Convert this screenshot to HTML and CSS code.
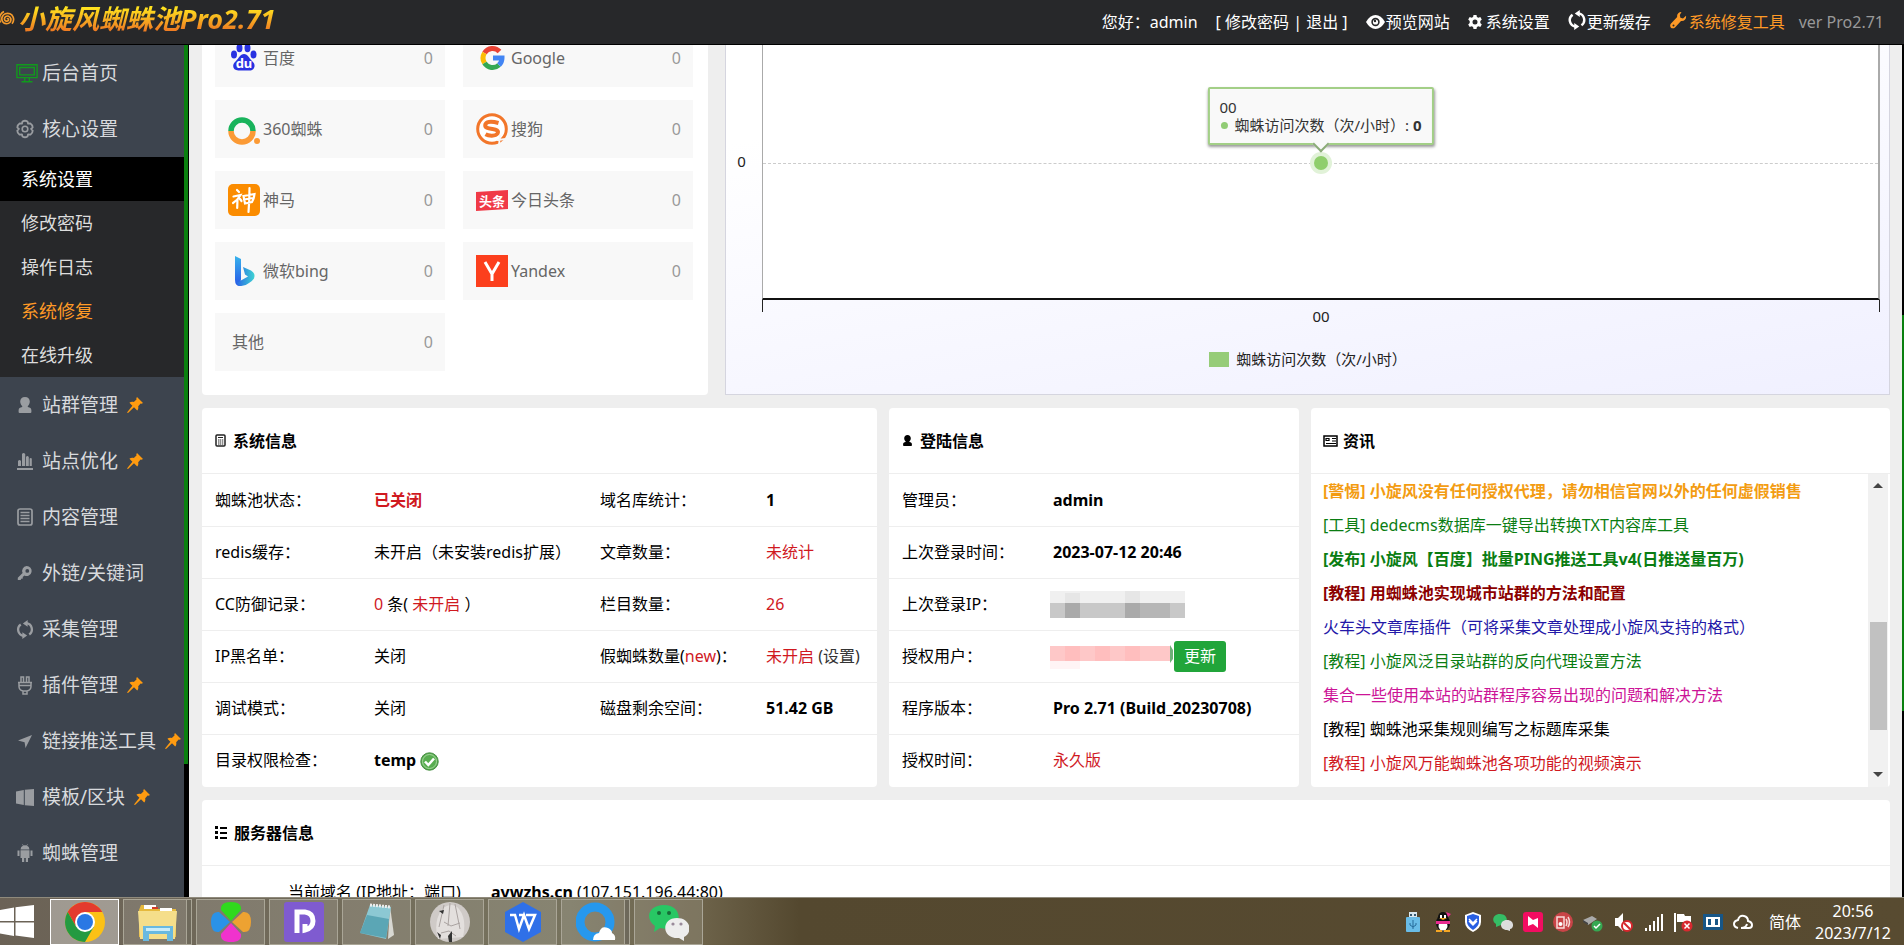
FILE: index.html
```
<!DOCTYPE html>
<html lang="zh-CN">
<head>
  <meta charset="UTF-8">
  <title>小旋风蜘蛛池Pro2.71</title>
  <link rel="stylesheet" href="styles.css">
</head>
<body>

<svg class="sprite" aria-hidden="true">
  <symbol id="pin" viewBox="0 0 16 16"><path d="M10 0 16 6 14.500 6.800 13.600 6.600 11.200 9.200C11.600 11 11.200 12.500 10.200 13.500L7 10.300 1 16 0 15.500 5.400 8.700 2.400 5.700C3.600 4.700 5.300 4.400 6.800 4.900L9.500 2.400 9.300 1.300Z"/></symbol>
  <symbol id="user" viewBox="0 0 16 16"><path d="M8 0c3 0 4.800 2 4.800 4.600 0 1.900-.8 3.500-2 4.500v1c2.300.4 3.600 1.300 3.600 3.300V15q0 1-1 1H2.600q-1 0-1-1v-1.600c0-2 1.300-2.900 3.600-3.300v-1c-1.200-1-2-2.600-2-4.500C3.200 2 5 0 8 0z"/></symbol>
  <symbol id="cycle" viewBox="0 0 16 18"><path d="M9.500 3A6 6 0 0 1 12 13.800M6.500 15A6 6 0 0 1 4 4.200" fill="none" stroke="currentColor" stroke-width="2.200"/><path d="M10.500 0v6.400L6 3.200zM5.500 18v-6.400L10 14.800z"/></symbol>
</svg>

<header class="header">
  <h1 class="logo">
    <svg width="18" height="18" viewBox="0 0 18 18"><path d="M9 9c1-1 2 .4 1.300 1.400-1 1.400-3.500.8-3.800-1C6.100 7 8.500 5.500 10.500 6.200c2.600.9 3.100 4 1.500 6-2 2.300-5.600 1.900-7.300-.5C2.800 8.800 4.200 5 7.300 3.800c3.200-1.200 6.500.3 7.700 3 1 2.300.6 5-1 7M2.500 12.500C.3 8 2 3.500 6 1.600" fill="none" stroke="#f39a2b" stroke-width="1.700"/></svg>
    <span>小旋风蜘蛛池Pro2.71</span>
  </h1>
  <nav class="top-nav">
    <span class="hello">您好：admin</span>
    <span>[ <a href="#">修改密码</a> | <a href="#">退出</a> ]</span>
    <a href="#"><svg width="19" height="16" viewBox="0 0 19 16"><path d="M0 8Q4 1 9.500 1T19 8Q15 15 9.500 15T0 8z"/><circle cx="9.500" cy="8" r="4.200" fill="#27282a"/><circle cx="9.500" cy="8" r="2.600"/><circle cx="9" cy="7" r="1.200" fill="#27282a"/></svg>预览网站</a>
    <a href="#"><svg class="spaced" width="14" height="16" viewBox="0 0 14 16"><path fill-rule="evenodd" d="M5.500 1h3l.4 2 1.500.8 1.900-.8 1.500 2.600L12.300 7v2l1.500 1.400-1.500 2.600-1.900-.8-1.500.8-.4 2h-3l-.4-2-1.500-.8-1.900.8L.2 10.400 1.700 9V7L.2 5.600 1.700 3l1.900.8L5.100 3zM7 5.500a2.500 2.500 0 1 0 0 5 2.500 2.500 0 0 0 0-5z"/></svg>系统设置</a>
    <a href="#"><svg width="18" height="20"><use href="#cycle"/></svg>更新缓存</a>
    <a href="#" class="orange"><svg width="19" height="19" viewBox="0 0 19 19"><path d="M12.500 1C10 .7 7.500 3 8.200 6L2 12.500C-.5 15.500 3 19 6 16.500L12 10c3.400.6 5.600-2.300 5-5.200L14 7.500 11.400 6.800 10.800 4zM4.500 13.600a1 1 0 1 1 0 2 1 1 0 0 1 0-2z"/></svg>系统修复工具</a>
    <span class="ver">ver Pro2.71</span>
  </nav>
</header>

<div class="layout">
  <aside class="sidebar">
    <nav class="menu">
      <a href="#" class="item"><svg class="home" width="24" height="22" viewBox="0 0 24 22"><path d="M1 2h22v14H1zM4 5h16v8H4zM9.500 16v4M14.500 16v4M6 20.500h12" fill="none" stroke="#119a1c" stroke-width="1.500"/></svg>后台首页</a>
      <a href="#" class="item"><svg width="18" height="18" viewBox="0 0 18 18"><path d="M6.500 1.500Q9 0 11.500 1.500l.6 2.200 2.300-.3q2.300 1.500 2.300 4L15.100 9l1.600 1.700q0 2.500-2.300 4l-2.300-.4-.6 2.200q-2.500 1.500-5 0l-.6-2.200-2.300.4q-2.300-1.500-2.300-4L2.900 9 1.300 7.400q0-2.500 2.300-4l2.300.3z" fill="none" stroke="currentColor" stroke-width="1.800" stroke-linejoin="round"/><circle cx="9" cy="9" r="2.800" fill="none" stroke="currentColor" stroke-width="1.600"/></svg>核心设置</a>
      <div class="submenu">
        <a href="#" class="active">系统设置</a>
        <a href="#">修改密码</a>
        <a href="#">操作日志</a>
        <a href="#" class="orange">系统修复</a>
        <a href="#">在线升级</a>
      </div>
      <a href="#" class="item"><svg width="16" height="16"><use href="#user"/></svg>站群管理<svg class="pin"><use href="#pin"/></svg></a>
      <a href="#" class="item"><svg width="16" height="18" viewBox="0 0 16 18"><path d="M1 9q1.500-2 3 0v5H1zM5 2q1.500-2 3.200 0v12H5zM9 5q1.300-2 2.800 0v9H9zM12.600 6.500q1-1 2.200 0V14h-2.200zM0 16h16v2H0z"/></svg>站点优化<svg class="pin"><use href="#pin"/></svg></a>
      <a href="#" class="item"><svg width="16" height="18" viewBox="0 0 16 18"><rect x="1" y="1" width="14" height="16" rx="2" fill="none" stroke="currentColor" stroke-width="1.700"/><path d="M3.500 4.500h9M3.500 7.500h9M3.500 10.500h9M3.500 13.500h9" stroke="currentColor" stroke-width="1.400"/></svg>内容管理</a>
      <a href="#" class="item"><svg width="16" height="16" viewBox="0 0 16 16"><path fill-rule="evenodd" d="M9.500 1a5 5 0 1 1-2 9.500L5.700 12l.2 1.500-1.800.3L3.700 15 .8 15V12.800L5.600 8A5 5 0 0 1 9.500 1zm.8 3a1.900 1.900 0 1 0 0 3.800 1.900 1.900 0 0 0 0-3.800z"/></svg>外链/关键词</a>
      <a href="#" class="item"><svg width="17" height="19"><use href="#cycle"/></svg>采集管理</a>
      <a href="#" class="item"><svg width="16" height="19" viewBox="0 0 16 19"><path d="M4 6V1h2.500v5M9.500 6V1H12v5M1 6.500h14M2 9.500h12M2 7v3.500Q2 14 6 15h4q4-1 4-4.500V7M6 15v3h4v-3" fill="none" stroke="currentColor" stroke-width="1.500"/></svg>插件管理<svg class="pin"><use href="#pin"/></svg></a>
      <a href="#" class="item"><svg width="16" height="16" viewBox="0 0 16 16"><path d="M15 2 8.500 15 7.600 9.300 1 7.600z"/></svg>链接推送工具<svg class="pin"><use href="#pin"/></svg></a>
      <a href="#" class="item"><svg width="18" height="17" viewBox="0 0 18 17"><path d="M0 2.500 7.800 1v15L0 14.500zM8.800.8 18 0v17l-9.200-.8z"/></svg>模板/区块<svg class="pin"><use href="#pin"/></svg></a>
      <a href="#" class="item"><svg width="16" height="18" viewBox="0 0 16 18"><path d="M3.500 5.500Q3.700 2.500 6 1.800L5.200.3l.4-.2.900 1.400q1.500-.5 3 0L10.400.1l.4.200L10 1.800q2.300.7 2.500 3.700zM3.500 6.200h9V14H11v4H8.800v-4H7.200v4H5v-4H3.500zM.5 6.500h2V12h-2zM13.500 6.500h2V12h-2z"/></svg>蜘蛛管理</a>
    </nav>
    <div class="side-scroll"><span></span></div>
  </aside>

  <main class="main">
    <div class="content">
      <div class="row row-top">
        <section class="card spiders">
          <div class="tile"><svg width="32" height="32" viewBox="0 0 32 32"><g fill="#2932e1"><ellipse cx="11.500" cy="6" rx="3" ry="4.200"/><ellipse cx="19.500" cy="6" rx="3" ry="4.200"/><ellipse cx="6" cy="12.500" rx="3" ry="3.900"/><ellipse cx="25.500" cy="12.500" rx="3" ry="3.900"/><path d="M16 12c4 0 5 4 8 7 5 4 2 10-3 9.500H11C5 29 3 23 8 19c3-3 4-7 8-7z"/></g><text class="du" x="16" y="26" text-anchor="middle" fill="#fff">du</text></svg><span>百度</span><b>0</b></div>
          <div class="tile"><svg width="32" height="32" viewBox="0 0 32 32"><g fill="none" stroke-width="5"><path d="M23.500 9.500A9.500 9.500 0 0 0 8.500 11" stroke="#ea4335"/><path d="M8.500 11a9.500 9.500 0 0 0 0 10" stroke="#fbbc05"/><path d="M8.500 21a9.500 9.500 0 0 0 14.500 2" stroke="#34a853"/><path d="M23 23q3-3 3-7h-9" stroke="#4285f4"/></g></svg><span>Google</span><b>0</b></div>
          <div class="tile"><svg width="32" height="32" viewBox="0 0 32 32"><g fill="none" stroke-width="5.500"><path d="M3 18a11 11 0 0 1 22 0" stroke="#19b35c"/><path d="M3 18a11 11 0 0 0 22 0" stroke="#fb9a35"/></g><circle cx="29" cy="28" r="3" fill="#fb9a35"/></svg><span>360蜘蛛</span><b>0</b></div>
          <div class="tile"><svg width="32" height="32" viewBox="0 0 32 32"><circle cx="16" cy="16" r="14.300" fill="#fff" stroke="#f2762a" stroke-width="3"/><path d="M22.500 10Q12 7 9.500 11c-1.500 4 3 4.500 7 5s6.500 1.500 5 4.500c-2 3-9 2.500-12 .8" fill="none" stroke="#f2762a" stroke-width="4"/><path d="m24 22-1 10M21 27l9-1" stroke="#f8f8f8" stroke-width="1.800"/></svg><span>搜狗</span><b>0</b></div>
          <div class="tile"><svg width="32" height="32" viewBox="0 0 32 32"><rect width="32" height="32" rx="5" fill="#fb8c00"/><g fill="none" stroke="#fff" stroke-width="2.200" stroke-linecap="round"><path d="m9 6 2 2M5.500 12.500l7-1.500Q10 16 5 19M9.500 15l-.3 9M12 15l1.500 2M15.500 12l11-2q-.5 5-2.500 8l-7 1.500zM16 15.500l9-1.500M21.500 4q0 13-1 24"/></g></svg><span>神马</span><b>0</b></div>
          <div class="tile"><svg width="32" height="32" viewBox="0 0 32 32"><path d="m0 8 32-2v19L0 27z" fill="#f03a47"/><text class="toutiao" x="16" y="22" text-anchor="middle" fill="#fff">头条</text></svg><span>今日头条</span><b>0</b></div>
          <div class="tile"><svg width="32" height="32" viewBox="0 0 32 32"><defs><linearGradient id="bing" x2="0" y2="1"><stop stop-color="#38b4ec"/><stop offset="1" stop-color="#2657e8"/></linearGradient><linearGradient id="bing2" x2="1" y2="0"><stop stop-color="#2864e6"/><stop offset="1" stop-color="#3ed3d3"/></linearGradient></defs><path d="m7 1 6 3v20l-1 7q-5 0-5-6z" fill="url(#bing)"/><path d="m15 12 8 3.500q5 3 3 8-2 3-5 4.500-4 3.500-9 3Q8 30 8 26q2 2 4 0l8-4.500-3-2z" fill="url(#bing2)"/></svg><span>微软bing</span><b>0</b></div>
          <div class="tile"><svg width="32" height="32" viewBox="0 0 32 32"><path fill="#fc3f1d" d="M0 0h32v32H0z"/><path d="m9 7 7 12m7-12-7 12v7" fill="none" stroke="#fff" stroke-width="3"/></svg><span>Yandex</span><b>0</b></div>
          <div class="tile other"><span>其他</span><b>0</b></div>
        </section>

        <section class="chart">
          <div class="y-axis">0</div>
          <div class="plot">
            <div class="grid-line"></div>
            <div class="marker"></div>
            <div class="tooltip">00<br><i></i>蜘蛛访问次数（次/小时）: <b>0</b></div>
          </div>
          <div class="ticks"></div>
          <div class="x-label">00</div>
          <div class="legend"><i></i>蜘蛛访问次数（次/小时）</div>
        </section>
      </div>

      <div class="row row-info">
        <section class="card">
          <h2><svg width="11" height="13" viewBox="0 0 11 13"><rect x="1" y="1" width="9" height="11" rx="1" fill="none" stroke="#222" stroke-width="1.500"/><path d="M3 3.500h5M3 6h1.500M5 6h1.300M7 6h1.300M3 8h1.500M5 8h1.300M7 8h1.300M3 10h1.500M5 10h1.300M7 10h1.300" stroke="#222" stroke-width="1.200"/></svg>系统信息</h2>
          <table class="system">
            <tr><th>蜘蛛池状态：</th><td><b class="red">已关闭</b></td><th>域名库统计：</th><td><b>1</b></td></tr>
            <tr><th>redis缓存：</th><td>未开启（未安装redis扩展）</td><th>文章数量：</th><td class="red">未统计</td></tr>
            <tr><th>CC防御记录：</th><td><span class="red">0</span> 条( <span class="red">未开启</span> ）</td><th>栏目数量：</th><td class="red">26</td></tr>
            <tr><th>IP黑名单：</th><td>关闭</td><th>假蜘蛛数量(<span class="red">new</span>)：</th><td><span class="red">未开启</span> <a href="#">(设置)</a></td></tr>
            <tr><th>调试模式：</th><td>关闭</td><th>磁盘剩余空间：</th><td><b>51.42 GB</b></td></tr>
            <tr><th>目录权限检查：</th><td><b>temp</b> <svg class="ok" width="19" height="19" viewBox="0 0 19 19"><circle cx="9.500" cy="9.500" r="8.700" fill="#58ad50" stroke="#438c3f"/><circle cx="9.500" cy="9.500" r="7" fill="none" stroke="#a5d69d"/><path d="m5 9.500 3.300 3.500L14 6.500" fill="none" stroke="#fff" stroke-width="2.500"/></svg></td><th></th><td></td></tr>
          </table>
        </section>

        <section class="card">
          <h2><svg width="11" height="11"><use href="#user"/></svg>登陆信息</h2>
          <table class="login">
            <tr><th>管理员：</th><td><b>admin</b></td></tr>
            <tr><th>上次登录时间：</th><td><b>2023-07-12 20:46</b></td></tr>
            <tr><th>上次登录IP：</th><td><svg class="mosaic" width="135" height="27" viewBox="0 0 135 27"><path fill="#f0f0f0" d="M0 0h135v12H0z"/><path fill="#e6e6e6" d="M15 2h15v10H15zM75 0h15v12H75z"/><path fill="#c8c8c8" d="M0 12h135v15H0z"/><path fill="#aaa" d="M15 12h15v15H15zM75 12h15v15H75z"/><path fill="#b6b6b6" d="M90 12h30v15H90z"/></svg></td></tr>
            <tr><th>授权用户：</th><td><div class="licence"><svg class="mosaic" width="124" height="26" viewBox="0 0 124 26"><path fill="#fec8c8" d="M0 3h120v15H0z"/><path fill="#ffbebe" d="M15 3h15v15H15zM45 3h15v15H45zM75 3h15v15H75z"/><path fill="#fff4f5" d="M0 18h30v8H0z"/><path fill="#6db077" d="m120 2 3 5v9l-3 4z"/></svg><button type="button">更新</button></div></td></tr>
            <tr><th>程序版本：</th><td><b>Pro 2.71 (Build_20230708)</b></td></tr>
            <tr><th>授权时间：</th><td class="red">永久版</td></tr>
          </table>
        </section>

        <section class="card">
          <h2 class="h-news"><svg width="15" height="12" viewBox="0 0 15 12"><rect x="1" y="1" width="13" height="10" fill="none" stroke="#000" stroke-width="1.500"/><path d="M3 3.500h3v2H3zM9 3.500h4M9 6h4M3 8.500h10" fill="none" stroke="#000" stroke-width="1.200"/></svg>资讯</h2>
          <div class="news">
            <ul>
              <li><a href="#" class="n-orange"><b>[警惕] 小旋风没有任何授权代理，请勿相信官网以外的任何虚假销售</b></a></li>
              <li><a href="#" class="n-green">[工具] dedecms数据库一键导出转换TXT内容库工具</a></li>
              <li><a href="#" class="n-green"><b>[发布] 小旋风【百度】批量PING推送工具v4(日推送量百万)</b></a></li>
              <li><a href="#" class="n-maroon"><b>[教程] 用蜘蛛池实现城市站群的方法和配置</b></a></li>
              <li><a href="#" class="n-blue">火车头文章库插件（可将采集文章处理成小旋风支持的格式）</a></li>
              <li><a href="#" class="n-green">[教程] 小旋风泛目录站群的反向代理设置方法</a></li>
              <li><a href="#" class="n-pink">集合一些使用本站的站群程序容易出现的问题和解决方法</a></li>
              <li><a href="#">[教程] 蜘蛛池采集规则编写之标题库采集</a></li>
              <li><a href="#" class="red">[教程] 小旋风万能蜘蛛池各项功能的视频演示</a></li>
            </ul>
            <div class="scrollbar">
              <svg width="10" height="6"><path d="m0 5 5-5 5 5z"/></svg>
              <span></span>
              <svg width="10" height="6"><path d="m0 0 5 5 5-5z"/></svg>
            </div>
          </div>
        </section>
      </div>

      <section class="card server">
        <h2><svg width="12" height="13" viewBox="0 0 12 13"><path d="M0 0h3v3H0zM5 1h7v2H5zM0 5h3v3H0zM5 6h7v2H5zM0 10h3v3H0zM5 11h7v2H5z"/></svg>服务器信息</h2>
        <table>
          <tr><th>当前域名 (IP地址：端口)</th><td><b>aywzhs.cn</b> (107.151.196.44:80)</td></tr>
        </table>
      </section>
    </div>
  </main>
  <div class="page-scroll"><span></span></div>
</div>

<footer class="taskbar">
  <button type="button" class="start" aria-label="开始"><svg width="34" height="34" viewBox="0 0 34 34"><path fill="#fff" d="m0 5 14-2.500V16H0zM15.500 2.200 34 0v16H15.500zM0 17.500h14V31L0 28.500zM15.500 17.500H34V33l-18.500-2.500z"/></svg></button>
  <button type="button" class="task current" aria-label="Chrome"><svg width="40" height="40" viewBox="0 0 40 40"><circle cx="20" cy="20" r="20" fill="#fbc116"/><path d="M2.700 10a20 20 0 0 1 34.600 0H20L11.300 25z" fill="#e33b2e"/><path d="M2.700 10a20 20 0 0 0 17.300 30l8.700-15H11.300z" fill="#249a41"/><circle cx="20" cy="20" r="10" fill="#fff"/><circle cx="20" cy="20" r="8" fill="#2a78e4"/></svg></button>
  <button type="button" class="task stacked" aria-label="资源管理器"><svg width="40" height="40" viewBox="0 0 40 40"><path fill="#e6b93d" d="M3 3h13l3 4h19v28H1V8z"/><path fill="#fff" d="M6 3h12v4H6zM22 6h12v4H22z"/><path fill="#d23c27" d="M14 5h6v2h-6z"/><path fill="#f5de8a" d="M0 9h39l-2 28H2z"/><path fill="#69b9e0" d="M5 24h30v15h-6v-7H11v7H5z"/><path fill="#c9ecfa" d="M8 26h24v3H8z"/></svg></button>
  <button type="button" class="task" aria-label="四叶草"><svg width="40" height="40" viewBox="0 0 40 40"><path fill="#30d91d" d="M20 19 10 8Q9 0 20 0t10 8z"/><path fill="#eda232" d="m21 20 11-10q8-1 8 10t-8 10z"/><path fill="#f032cd" d="m20 21 10 11q1 8-10 8t-10-8z"/><path fill="#2a92e8" d="M19 20 8 30q-8 1-8-10t8-10z"/></svg></button>
  <button type="button" class="task" aria-label="D"><svg width="40" height="40" viewBox="0 0 40 40"><rect width="40" height="40" rx="3" fill="#7f5bd0"/><path d="M13 31V10h8q8 1 8 9 0 7-8 9v-6" fill="none" stroke="#fff" stroke-width="5"/></svg></button>
  <button type="button" class="task" aria-label="记事本"><svg width="40" height="40" viewBox="0 0 40 40"><path fill="#d8d8d2" d="m33 4 4 29-6 4z"/><path fill="#8cc8d3" d="M13 3 34 5 29 37 3 31z"/><path fill="#4697a8" d="m10 13 22 4-3 19-26-5z" opacity=".7"/><path d="m13 3 21 2" stroke="#eee" stroke-width="3" stroke-dasharray="2 1"/></svg></button>
  <button type="button" class="task" aria-label="头像"><svg width="40" height="40" viewBox="0 0 40 40"><circle cx="20" cy="20" r="20" fill="#cfcac7"/><path d="M8 37Q3 20 12 7q10-8 17 0 8 10 4 28" fill="#e3dfdd"/><path d="M14 3 9 25m11-24-2 23M25 2l5 25M14 20l7 4 9-3M11 31l8-2 7 5" fill="none" stroke="#aaa3a1" stroke-width="1"/><path fill="#333" d="m7 30 4 3-1 4zM18 34l4-5v11h-3zM9 9l5-1-1 4z"/></svg></button>
  <button type="button" class="task" aria-label="WPS"><svg width="40" height="40" viewBox="0 0 40 40"><path fill="#2f70e8" d="M20 0 38 10v20L20 40 2 30V10z"/><path d="M7 13h5l4 14 5-14 5 14 6-14h-9M16 13h4" fill="none" stroke="#fff" stroke-width="2.500"/></svg></button>
  <button type="button" class="task stacked" aria-label="浏览器"><svg width="40" height="40" viewBox="0 0 40 40"><circle cx="19" cy="20" r="15" fill="none" stroke="#2698ee" stroke-width="9"/><path d="M17 38q0-6 6-7 2-8 9-5 4 2 4 5 4 2 3 7z" fill="#fff"/></svg></button>
  <button type="button" class="task" aria-label="微信"><svg width="40" height="40" viewBox="0 0 40 40"><path fill="#28c764" d="M15 3c18 0 20 21 3 24l-7-1-6 4 1-6C-5 16 0 3 15 3z"/><path fill="#ededed" d="M28 16c14 0 16 15 7 19v4l-5-3c-18 1-18-20-2-20z"/><g fill="#176b38"><circle cx="10" cy="11" r="2"/><circle cx="20" cy="11" r="2"/></g><g fill="#998a9a"><circle cx="24" cy="22" r="1.600"/><circle cx="32" cy="22" r="1.600"/></g></svg></button>

  <div class="tray">
    <svg viewBox="0 0 20 20"><path fill="#d8e7ef" d="M6 0h8v6H6z"/><path fill="#355870" d="M7 2h2v2H7zM11 2h2v2h-2z"/><rect x="3" y="5" width="14" height="15" rx="1" fill="#69bce7"/><path d="M10 8v9M7 11v2l3 2 3-2v-2" fill="none" stroke="#266b9a"/></svg>
    <svg viewBox="0 0 20 20"><ellipse cx="10" cy="11" rx="7" ry="8" fill="#111"/><circle cx="10" cy="5" r="5" fill="#111"/><ellipse cx="10" cy="14" rx="4.500" ry="4.500" fill="#fff"/><path fill="#e82b91" d="M3 9h14v3H3zM13 0l5 2-3 3z"/><path fill="#f5a623" d="M6 6h8l-4 2zM3 18h6v2H3zM11 18h6v2h-6z"/><path fill="#fff" d="M7 3h2v3H7zM11 3h2v3h-2z"/></svg>
    <svg viewBox="0 0 20 20"><path fill="#fff" d="m10 0 8 3v7q0 6-8 10-8-4-8-10V3z"/><path fill="#285fe3" d="m10 2 6 2v6q0 4-6 8-6-4-6-8V4z"/><path d="m6 7 4 4 4-4M6 9l4 4 4-4" fill="none" stroke="#fff" stroke-width="1.500"/></svg>
    <svg viewBox="0 0 20 20"><path fill="#35bd65" d="M7 2c9 0 9 11 1 11l-5 2v-3C-2 9 0 2 7 2z"/><path fill="#ddd" d="M14 8c8 0 7 9 3 9v2l-3-1c-8 0-8-10 0-10z"/></svg>
    <svg viewBox="0 0 20 20"><rect width="20" height="20" rx="3" fill="#f20d61"/><path fill="#fff" d="m5 4 5 4 5-2v10l-5-4-5 2z"/></svg>
    <svg viewBox="0 0 20 20"><circle cx="10" cy="10" r="10" fill="#c84447"/><path d="M4 5h7v11H4zM13 7q2 3 0 7M15 5q3 5 0 10" fill="none" stroke="#f7dada" stroke-width="1.500"/><circle cx="7.500" cy="12" r="2" fill="#fff"/></svg>
    <svg viewBox="0 0 20 20"><path fill="#aaa" d="m0 8 9-4 5 3-9 6z"/><path fill="#444" d="m0 8 5 3v2L0 10z"/><circle cx="14" cy="14" r="5.500" fill="#36a852"/><path d="m11 14 2 2 4-4" fill="none" stroke="#fff" stroke-width="1.500"/></svg>
    <svg viewBox="0 0 20 20"><path fill="#fff" d="M2 6h3l5-5v18l-5-5H2z"/><circle cx="14" cy="14" r="5" fill="#fff" stroke="#d5262c" stroke-width="2"/><path d="m11 11 6 6" stroke="#d5262c" stroke-width="2"/></svg>
    <svg viewBox="0 0 20 20"><path fill="#fff" d="M2 16h2v3H2zM6 13h2v6H6zM10 9h2v10h-2zM14 5h2v14h-2zM18 2h2v17h-2z"/></svg>
    <svg viewBox="0 0 20 20"><path fill="#fff" d="M1 1h2v19H1zM4 2h7l1 2h6v8h-7l-1-2H4z"/><circle cx="14" cy="14" r="5.500" fill="#d8292f"/><path d="m11.500 11.500 5 5m0-5-5 5" stroke="#fff" stroke-width="1.500"/></svg>
    <svg viewBox="0 0 20 20"><path fill="#175687" d="M0 2h20v16H0z"/><path d="M4 6h5v8H4zM11 6h5v8h-5z" fill="none" stroke="#fff" stroke-width="2"/></svg>
    <svg viewBox="0 0 20 20"><path d="M5 16q-4-1-4-4t4-4q1-5 6-4 4 1 4 5 4 1 4 4t-3 3H8q5 0 6-4" fill="none" stroke="#fff" stroke-width="2"/></svg>
  </div>
  <span class="lang">简体</span>
  <time class="clock">20:56<br>2023/7/12</time>
</footer>

</body>
</html>
```
FILE: styles.css
```
* { box-sizing: border-box; }
body { margin: 0; height: 100vh; display: flex; flex-direction: column; overflow: hidden; font: 16px/24px "Noto Sans", "Noto Sans CJK SC", sans-serif; color: #000; background: #eee; }
a { color: inherit; text-decoration: none; }
svg { flex: none; fill: currentColor; }
.sprite { position: absolute; width: 0; height: 0; }
.red { color: #d0191f; }
.orange { color: #ff9a26; }

/* header */
.header { flex: none; height: 45px; display: flex; justify-content: space-between; background: #27282a; border-bottom: 1px solid #000; color: #fff; }
.logo { margin: 0 0 0 -2px; display: flex; align-items: center; gap: 2px; height: 38px; font-size: 27px; line-height: 36px; font-style: italic; }
.logo span { padding-right: 4px; background: linear-gradient(#ffe21f 20%, #ee7d22 80%); -webkit-background-clip: text; background-clip: text; color: transparent; }
.top-nav { display: flex; align-items: center; gap: 18px; height: 44px; padding-right: 20px; white-space: nowrap; }
.top-nav a svg { vertical-align: -2px; margin-right: 1px; }
.top-nav a svg.spaced { margin-right: 4px; }
.top-nav .ver { color: #999; margin-left: -4px; }

/* sidebar */
.layout { flex: 1; display: flex; min-height: 0; }
.sidebar { flex: none; width: 189px; display: flex; background: #3d444e; overflow: hidden; }
.menu { flex: 1; }
.item { display: flex; align-items: center; height: 56px; padding-left: 16px; font-size: 19px; color: #d8dadd; white-space: nowrap; }
.item svg { color: #9a9da1; width: 18px; margin-right: 8px; overflow: visible; }
.item svg.home { width: 22px; margin-right: 4px; }
.item svg.pin { width: 16px; height: 16px; margin: 0 0 0 9px; color: #ff9b10; }
.submenu { background: #27282a; font-size: 18px; color: #ddd; }
.submenu a { display: block; line-height: 44px; padding-left: 21px; }
.submenu .active { background: #000; color: #fff; }
.submenu .orange { color: #ff9a26; }
.side-scroll { width: 5px; background: #000; }
.side-scroll span { display: block; height: 719px; background: #0a800f; border-right: 1px solid #000; }
.page-scroll { flex: none; width: 2px; background: #000; padding-top: 270px; }
.page-scroll span { display: block; height: 396px; background: #0a800f; }

/* content */
.main { flex: 1; min-width: 0; overflow: hidden; }
.content { margin: -16px 12px 0 13px; }
.card { background: #fff; border-radius: 4px; min-width: 0; }
.row { display: grid; margin-bottom: 13px; }
.row-top { grid-template-columns: 506fr 1165fr; gap: 17px; height: 366px; }
.row-info { grid-template-columns: 675fr 410fr 579fr; gap: 12px; height: 379px; }

.spiders { display: grid; grid-template-columns: 1fr 1fr; grid-auto-rows: 58px; gap: 13px 18px; padding: 0 15px 0 13px; }
.tile { display: flex; align-items: center; gap: 3px; padding: 0 12px 0 13px; background: #f8f8f8; color: #666; }
.tile.other { padding-left: 17px; }
.tile b { margin-left: auto; font-weight: normal; color: #999; }
.tile svg { overflow: visible; }
.du { font: bold 13px "Noto Sans", sans-serif; }
.toutiao { font: bold 13px "Noto Sans CJK SC", sans-serif; }

/* chart */
.chart { display: grid; grid-template-columns: 36px 1fr 9px; grid-template-rows: 270px 12px auto auto; align-content: start; border: 1px solid #d5d5df; background: linear-gradient(170deg, #fff 20%, #f0f0ff); font-size: 15px; line-height: 18px; color: #222; }
.y-axis { padding: 122px 5px 0 0; text-align: center; }
.plot { position: relative; background: #fff; border: 1px solid #aaa; border-width: 0 2px 2px 1px; border-bottom-color: #111; }
.grid-line { height: 134px; border-bottom: 1px dashed #ccc; }
.marker { position: absolute; left: 50%; top: 133px; width: 14px; height: 14px; margin: -7px; border-radius: 50%; background: #8fce6c; box-shadow: 0 0 0 4px #e1f2d8; }
.tooltip { position: absolute; left: 50%; top: 57px; transform: translateX(-50%); padding: 9px 10px; border: 2px solid #a3cf87; border-radius: 2px; background: #f9f9f9; box-shadow: 1px 2px 3px #999; white-space: nowrap; color: #333; }
.tooltip::after { content: ""; position: absolute; left: 50%; bottom: -7px; width: 10px; height: 10px; margin-left: -6px; background: #f9f9f9; border: solid #8bab78; border-width: 0 2px 2px 0; transform: rotate(45deg); }
.tooltip i { display: inline-block; width: 7px; height: 7px; margin: 0 7px 2px 1px; border-radius: 50%; background: #91cc75; }
.ticks { grid-column: 2; border: 1px solid #222; border-width: 0 1px; }
.x-label { grid-column: 2; margin-top: -5px; text-align: center; }
.legend { grid-column: 2; display: flex; align-items: center; justify-content: center; gap: 7px; padding: 25px 26px 0 0; }
.legend i { width: 20px; height: 15px; background: #96cc78; }

/* info cards */
h2 { display: flex; align-items: center; gap: 7px; height: 66px; margin: 0; padding-left: 13px; border-bottom: 1px solid #eee; font-size: 16px; }
.h-news { gap: 5px; padding-left: 12px; }
table { width: 100%; table-layout: fixed; border-collapse: collapse; }
tr + tr { border-top: 1px solid #eee; }
th, td { height: 52px; padding: 0; text-align: left; font-weight: normal; white-space: nowrap; }
th:first-child { padding-left: 13px; width: 37%; }
.login th:first-child { width: 40%; }
.system th:first-child { width: 172px; }
.system td:nth-child(2) { width: 226px; }
.system th:nth-child(3) { width: 166px; }
.system a { color: #333; }
.ok { vertical-align: -5px; }
.mosaic { display: block; margin-left: -3px; }
.licence { display: flex; align-items: center; }
.licence button { height: 31px; padding: 0 10px; border: 0; border-radius: 3px; background: #21a53a; color: #fff; font: inherit; }

.news { display: flex; height: 313px; }
.news ul { flex: 1; margin: 0; padding: 0 0 0 12px; list-style: none; white-space: nowrap; overflow: hidden; }
.news li { line-height: 34px; }
.n-orange { color: #f39c12; }
.n-green { color: #0a7d12; }
.n-maroon { color: #8b0000; }
.n-blue { color: #2318a8; }
.n-pink { color: #cc1497; }
.scrollbar { width: 20px; margin-right: 2px; padding: 9px 0; display: flex; flex-direction: column; align-items: center; background: #f1f1f1; color: #444; }
.scrollbar span { width: 17px; height: 108px; margin: 133px 0 auto; background: #c1c1c1; }
.server th:first-child { width: 289px; padding-left: 86px; }

/* taskbar */
.taskbar { flex: none; height: 48px; display: flex; align-items: center; gap: 4px; padding-right: 13px; background: linear-gradient(90deg, #6b6256, #77735e 30%, #6c6249 37%, #54482f 42%, #584b31); border-top: 1px solid #8f8a7c; color: #fff; }
.taskbar button { padding: 0; background: none; border: 0; display: flex; align-items: center; justify-content: center; }
.taskbar .start { width: 46px; height: 46px; justify-content: flex-start; }
.taskbar .task { flex: none; width: 69px; height: 46px; border: 1px solid #aaa697; background: rgba(255, 255, 255, .12); }
.taskbar .task.current { border-color: #fff; background: rgba(255, 255, 255, .35); }
.taskbar .task.stacked { box-shadow: inset -4px 0 #6e695b, inset -5px 0 #aaa697; }
.tray { margin-left: auto; display: flex; gap: 10px; }
.tray svg { width: 20px; height: 20px; }
.lang { margin: 0 10px 0 12px; }
.clock { line-height: 22px; text-align: center; }
```
